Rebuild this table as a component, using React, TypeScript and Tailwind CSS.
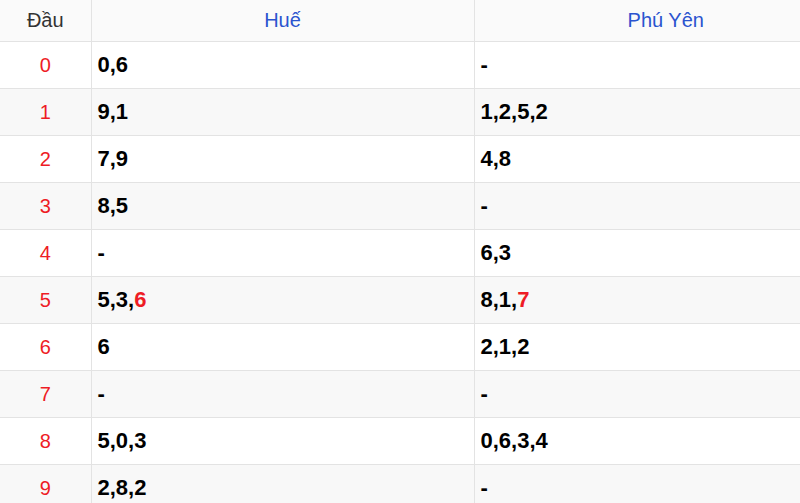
import React from "react";

type Cell = { text: string; hot?: string };

const rows: { head: string; hue: Cell; phuyen: Cell }[] = [
  { head: "0", hue: { text: "0,6" }, phuyen: { text: "-" } },
  { head: "1", hue: { text: "9,1" }, phuyen: { text: "1,2,5,2" } },
  { head: "2", hue: { text: "7,9" }, phuyen: { text: "4,8" } },
  { head: "3", hue: { text: "8,5" }, phuyen: { text: "-" } },
  { head: "4", hue: { text: "-" }, phuyen: { text: "6,3" } },
  { head: "5", hue: { text: "5,3,", hot: "6" }, phuyen: { text: "8,1,", hot: "7" } },
  { head: "6", hue: { text: "6" }, phuyen: { text: "2,1,2" } },
  { head: "7", hue: { text: "-" }, phuyen: { text: "-" } },
  { head: "8", hue: { text: "5,0,3" }, phuyen: { text: "0,6,3,4" } },
  { head: "9", hue: { text: "2,8,2" }, phuyen: { text: "-" } },
];

function Value({ cell }: { cell: Cell }) {
  return (
    <span>
      {cell.text}
      {cell.hot && <span className="text-[#ee1c25]">{cell.hot}</span>}
    </span>
  );
}

export default function App() {
  return (
    <div className="w-full overflow-hidden bg-white font-['Liberation_Sans',Arial,sans-serif]">
      <table className="w-[857px] border-collapse table-fixed">
        <colgroup>
          <col className="w-[91px]" />
          <col className="w-[383px]" />
          <col className="w-[383px]" />
        </colgroup>
        <thead>
          <tr className="h-[41px] bg-[#fafafa] text-[20px] font-normal">
            <th className="border-b border-r border-[#e3e3e3] font-normal text-[#333]">Đầu</th>
            <th className="border-b border-r border-[#e3e3e3] font-normal text-[#2b54cf]">Huế</th>
            <th className="border-b border-[#e3e3e3] font-normal text-[#2b54cf]">Phú Yên</th>
          </tr>
        </thead>
        <tbody>
          {rows.map((r, i) => (
            <tr key={r.head} className={`h-[47px] ${i % 2 === 1 ? "bg-[#f8f8f8]" : "bg-white"}`}>
              <td className="border-b border-r border-[#e3e3e3] text-center text-[20px] text-[#ee1c25]">{r.head}</td>
              <td className="border-b border-r border-[#e3e3e3] pl-[6px] text-[22px] font-bold text-black">
                <Value cell={r.hue} />
              </td>
              <td className="border-b border-[#e3e3e3] pl-[6px] text-[22px] font-bold text-black">
                <Value cell={r.phuyen} />
              </td>
            </tr>
          ))}
        </tbody>
      </table>
    </div>
  );
}
